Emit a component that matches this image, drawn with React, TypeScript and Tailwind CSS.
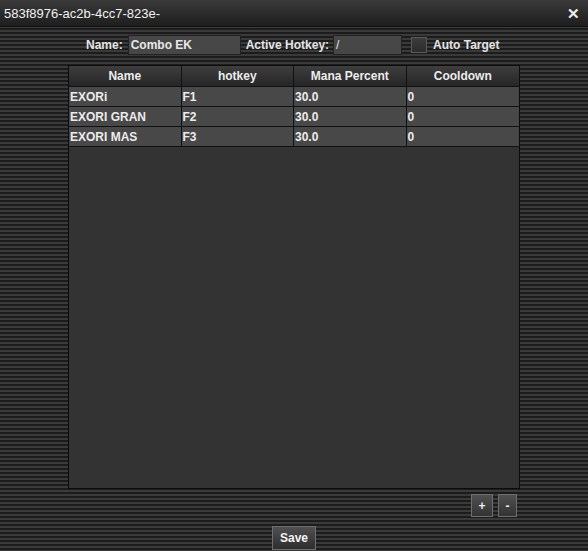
import React from "react";

const rows = [
  { name: "EXORi", hotkey: "F1", mana: "30.0", cd: "0" },
  { name: "EXORI GRAN", hotkey: "F2", mana: "30.0", cd: "0" },
  { name: "EXORI MAS", hotkey: "F3", mana: "30.0", cd: "0" },
];

const headers = ["Name", "hotkey", "Mana Percent", "Cooldown"];

export default function App() {
  return (
    <div
      className="w-[588px] h-[551px] flex flex-col overflow-hidden text-[12px] text-[#e4e4e4] bg-[repeating-linear-gradient(to_bottom,#1c1c1c_0px,#1c1c1c_2px,#3a3a3a_2px,#3a3a3a_4px)]"
      style={{ fontFamily: '"Liberation Sans", Arial, sans-serif' }}
    >
      {/* Title bar */}
      <div className="h-[27px] shrink-0 flex items-center justify-between pl-[4px] pr-[8px] bg-gradient-to-b from-[#3a3a3a] to-[#1e1e1e] border-b border-[#111]">
        <span className="text-[13px] text-[#f0f0f0] mt-[2px]">583f8976-ac2b-4cc7-823e-</span>
        <span className="text-[15px] font-bold text-[#eee] leading-none">✕</span>
      </div>

      {/* Form row */}
      <div className="flex items-center h-[20px] mt-[8px] pl-[86px] font-bold">
        <span>Name:</span>
        <div className="ml-[5px] w-[113px] h-[20px] bg-[#474747] border border-[#222] flex items-center px-[2px] font-bold text-[#e8e8e8]">
          Combo EK
        </div>
        <span className="ml-[5px]">Active Hotkey:</span>
        <div className="ml-[4px] w-[69px] h-[20px] bg-[#474747] border border-[#222] flex items-center px-[2px] font-normal">
          /
        </div>
        <div className="ml-[9px] w-[16px] h-[16px] bg-gradient-to-b from-[#3c3c3c] to-[#2c2c2c] border border-[#5a5a5a]" />
        <span className="ml-[6px]">Auto Target</span>
      </div>

      {/* Table */}
      <div className="ml-[68px] mt-[10px] w-[452px] h-[424px] border border-[#0c0c0c] bg-[#333333] flex flex-col">
        <div className="grid grid-cols-4 h-[21px] bg-gradient-to-b from-[#3e3e3e] to-[#262626] border-b border-[#111] font-bold text-[#ececec]">
          {headers.map((h, i) => (
            <div
              key={h}
              className={`flex items-center justify-center ${i < 3 ? "border-r border-[#111]" : ""}`}
            >
              {h}
            </div>
          ))}
        </div>
        {rows.map((r) => (
          <div key={r.name} className="grid grid-cols-4 h-[20px] bg-[#484848] border-b border-[#111] font-bold text-[#ececec]">
            {[r.name, r.hotkey, r.mana, r.cd].map((c, i) => (
              <div key={i} className={`flex items-center px-[1px] ${i < 3 ? "border-r border-[#111]" : ""}`}>
                {c}
              </div>
            ))}
          </div>
        ))}
      </div>

      {/* +/- buttons */}
      <div className="flex justify-end gap-[5px] pr-[71px] mt-[5px]">
        <button className="w-[22px] h-[23px] bg-gradient-to-b from-[#505050] to-[#333] border border-[#6e6e6e] text-[#f0f0f0] font-bold text-[12px] flex items-center justify-center">
          +
        </button>
        <button className="w-[19px] h-[23px] bg-gradient-to-b from-[#505050] to-[#333] border border-[#6e6e6e] text-[#f0f0f0] font-bold text-[12px] flex items-center justify-center">
          -
        </button>
      </div>

      {/* Save */}
      <div className="flex justify-center mt-[9px]">
        <button className="w-[44px] h-[24px] bg-gradient-to-b from-[#505050] to-[#2e2e2e] border border-[#6e6e6e] text-[#f4f4f4] font-bold text-[12px] flex items-center justify-center">
          Save
        </button>
      </div>
    </div>
  );
}
